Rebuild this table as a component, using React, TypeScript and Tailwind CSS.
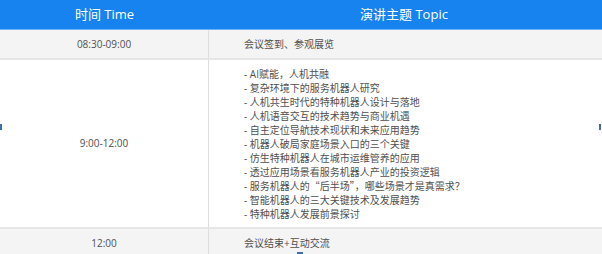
import React from "react";

const cjk = { fontFamily: '"Noto Sans CJK SC", sans-serif' };

const topics: React.ReactNode[] = [
  "- AI赋能，人机共融",
  "- 复杂环境下的服务机器人研究",
  "- 人机共生时代的特种机器人设计与落地",
  "- 人机语音交互的技术趋势与商业机遇",
  "- 自主定位导航技术现状和未来应用趋势",
  "- 机器人破局家庭场景入口的三个关键",
  "- 仿生特种机器人在城市运维管养的应用",
  "- 透过应用场景看服务机器人产业的投资逻辑",
  <>
    - 服务机器人的<span style={cjk}>“</span>后半场<span style={cjk}>”</span>
    <span style={cjk}>，</span>哪些场景才是真需求<span style={cjk}>？</span>
  </>,
  "- 智能机器人的三大关键技术及发展趋势",
  "- 特种机器人发展前景探讨",
];

const font = { fontFamily: '"Segoe UI", "Open Sans", "Noto Sans CJK SC", sans-serif' };

export default function App() {
  return (
    <div className="relative w-[602px] h-[254px] overflow-hidden bg-white" style={font}>
      <div className="flex h-[30px] bg-[#1783ef] border-b border-[#6db2f3] text-white text-[13px]">
        <div className="w-[209px] flex items-center justify-center">时间 Time</div>
        <div className="flex-1 flex items-center justify-center pr-[3px]">演讲主题 Topic</div>
      </div>
      <div className="flex h-[30px] bg-[#f4f4f4] border-b-2 border-[#e6e6e6] text-[10px] text-[#505050]">
        <div className="w-[209px] border-r border-[#dedede] flex items-center justify-center">08:30-09:00</div>
        <div className="flex-1 flex items-center pl-[35px]">会议签到、参观展览</div>
      </div>
      <div className="flex h-[169px] bg-white border-b-2 border-[#e6e6e6] text-[10px] text-[#505050]">
        <div className="w-[209px] border-r border-[#dedede] flex items-center justify-center">9:00-12:00</div>
        <div className="flex-1 flex flex-col pl-[35px] pt-[7px] leading-[14px]">
          {topics.map((t, i) => (
            <div key={i} className="whitespace-nowrap">{t}</div>
          ))}
        </div>
      </div>
      <div className="flex h-[30px] bg-[#f4f4f4] text-[10px] text-[#505050]">
        <div className="w-[209px] border-r border-[#dedede] flex items-center justify-center pb-[2px]">12:00</div>
        <div className="flex-1 flex items-center pl-[35px] pb-[2px]">会议结束+互动交流</div>
      </div>
      <div className="absolute left-0 top-[124px] w-[2px] h-[6px] bg-[#3e6fa8]" />
      <div className="absolute left-[599px] top-[124px] w-[2px] h-[6px] bg-[#3e6fa8]" />
      <div className="absolute left-[297px] top-[252px] w-[6px] h-[2px] bg-[#3e6fa8]" />
    </div>
  );
}
